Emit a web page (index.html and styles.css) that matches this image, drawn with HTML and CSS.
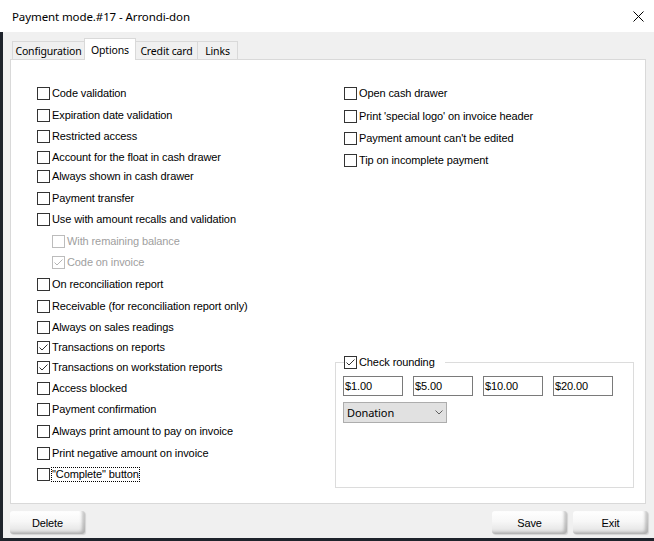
FILE: index.html
```html
<!DOCTYPE html>
<html>
<head>
<meta charset="utf-8">
<link rel="stylesheet" href="styles.css">
</head>
<body>
<div class="window">
  <div class="titlebar">
    <span class="title">Payment mode.#17 - Arrondi-don</span>
    <svg class="close" width="11" height="11" viewBox="0 0 11 11"><path d="M0.5 0.5 L10.5 10.5 M10.5 0.5 L0.5 10.5" stroke="#000" stroke-width="1" fill="none"/></svg>
  </div>
  <div class="client">
    <div class="tabs">
      <div class="tab t-config">Configuration</div>
      <div class="tab t-options active">Options</div>
      <div class="tab t-credit">Credit card</div>
      <div class="tab t-links">Links</div>
    </div>
    <div class="panel">
      <div class="col-left">
        <label class="cb"><span class="box"></span><span class="lbl">Code validation</span></label>
        <label class="cb"><span class="box"></span><span class="lbl">Expiration date validation</span></label>
        <label class="cb"><span class="box"></span><span class="lbl">Restricted access</span></label>
        <label class="cb"><span class="box"></span><span class="lbl">Account for the float in cash drawer</span></label>
        <label class="cb"><span class="box"></span><span class="lbl">Always shown in cash drawer</span></label>
        <label class="cb"><span class="box"></span><span class="lbl">Payment transfer</span></label>
        <label class="cb"><span class="box"></span><span class="lbl">Use with amount recalls and validation</span></label>
        <label class="cb sub disabled"><span class="box"></span><span class="lbl">With remaining balance</span></label>
        <label class="cb sub disabled"><span class="box"><svg width="11" height="11" viewBox="0 0 11 11"><path d="M1.5 5.5 L4 8 L9.5 2.5" stroke="#b4b4b4" stroke-width="1" fill="none"/></svg></span><span class="lbl">Code on invoice</span></label>
        <label class="cb"><span class="box"></span><span class="lbl">On reconciliation report</span></label>
        <label class="cb"><span class="box"></span><span class="lbl">Receivable (for reconciliation report only)</span></label>
        <label class="cb"><span class="box"></span><span class="lbl">Always on sales readings</span></label>
        <label class="cb"><span class="box"><svg width="11" height="11" viewBox="0 0 11 11"><path d="M1.5 5.5 L4 8 L9.5 2.5" stroke="#333" stroke-width="1" fill="none"/></svg></span><span class="lbl">Transactions on reports</span></label>
        <label class="cb"><span class="box"><svg width="11" height="11" viewBox="0 0 11 11"><path d="M1.5 5.5 L4 8 L9.5 2.5" stroke="#333" stroke-width="1" fill="none"/></svg></span><span class="lbl">Transactions on workstation reports</span></label>
        <label class="cb"><span class="box"></span><span class="lbl">Access blocked</span></label>
        <label class="cb"><span class="box"></span><span class="lbl">Payment confirmation</span></label>
        <label class="cb"><span class="box"></span><span class="lbl">Always print amount to pay on invoice</span></label>
        <label class="cb"><span class="box"></span><span class="lbl">Print negative amount on invoice</span></label>
        <label class="cb"><span class="box"></span><span class="lbl focus">"Complete" button</span></label>
      </div>
      <div class="col-right">
        <label class="cb"><span class="box"></span><span class="lbl">Open cash drawer</span></label>
        <label class="cb"><span class="box"></span><span class="lbl">Print 'special logo' on invoice header</span></label>
        <label class="cb"><span class="box"></span><span class="lbl">Payment amount can't be edited</span></label>
        <label class="cb"><span class="box"></span><span class="lbl">Tip on incomplete payment</span></label>
        <fieldset class="group">
          <legend class="legend"><span class="cb"><span class="box"><svg width="11" height="11" viewBox="0 0 11 11"><path d="M1.5 5.5 L4 8 L9.5 2.5" stroke="#333" stroke-width="1" fill="none"/></svg></span><span class="lbl">Check rounding</span></span></legend>
          <div class="amounts">
            <div class="field">$1.00</div>
            <div class="field">$5.00</div>
            <div class="field">$10.00</div>
            <div class="field">$20.00</div>
          </div>
          <div class="combo"><span>Donation</span><svg width="8" height="5" viewBox="0 0 8 5"><path d="M0.5 0.5 L4 4 L7.5 0.5" stroke="#606060" stroke-width="1" fill="none"/></svg></div>
        </fieldset>
      </div>
    </div>
    <div class="footer">
      <div class="btn">Delete</div>
      <div class="spacer"></div>
      <div class="btn">Save</div>
      <div class="btn">Exit</div>
    </div>
  </div>
</div>
</body>
</html>
```
FILE: styles.css
```css
html, body {
  margin: 0;
  padding: 0;
  background: #1e232b;
}
.window {
  width: 654px;
  height: 541px;
  display: flex;
  flex-direction: column;
  overflow: hidden;
}
.titlebar {
  height: 32px;
  flex: none;
  background: #fff;
  display: flex;
  align-items: center;
  justify-content: space-between;
  padding: 0 10px 0 12px;
  box-sizing: border-box;
}
.title {
  font-family: "Noto Sans", "Lato", sans-serif;
  font-size: 11.5px;
  letter-spacing: -0.1px;
  color: #000;
}
.close { display: block; }
.client {
  height: 506px;
  flex: none;
  margin-left: 3px;
  background: #f0f0f0;
  padding: 6px 0 0 7px;
  box-sizing: border-box;
  font-family: "Liberation Sans", Arial, sans-serif;
  font-size: 11px;
  letter-spacing: -0.1px;
  color: #000;
}
.tabs {
  display: flex;
  align-items: flex-end;
  height: 21px;
  padding-left: 2px;
}
.tab {
  height: 18px;
  box-sizing: border-box;
  border: 1px solid #d9d9d9;
  border-bottom: none;
  background: #f0f0f0;
  display: flex;
  align-items: center;
  justify-content: center;
  font-family: "Noto Sans", "Lato", sans-serif;
  font-size: 10.5px;
  letter-spacing: -0.15px;
  margin-right: -1px;
}
.tab.active {
  height: 22px;
  margin-bottom: -1px;
  background: #fff;
  position: relative;
  z-index: 1;
}
.t-config { width: 73px; }
.t-options { width: 52px; }
.t-credit { width: 63px; }
.t-links { width: 41px; }
.panel {
  width: 636px;
  height: 445px;
  box-sizing: border-box;
  border: 1px solid #d9d9d9;
  background: #fff;
  display: flex;
  padding: 27px 0 15px 26px;
}
.col-left {
  width: 307px;
  display: grid;
  grid-template-rows: 22px 21px 21px 19px 22px 21px 22px 21px 22px 22px 21px 20px 20px 21px 21px 22px 22px 21px 21px;
  align-content: start;
}
.col-right {
  flex: 1;
  display: grid;
  grid-template-rows: 23px 22px 22px 22px 1fr auto;
}
.cb {
  display: flex;
  align-items: flex-start;
  line-height: 13px;
  white-space: nowrap;
}
.box {
  width: 13px;
  height: 13px;
  box-sizing: border-box;
  border: 1px solid #333;
  background: #fff;
  flex: none;
  margin-right: 2px;
  display: flex;
  align-items: center;
  justify-content: center;
}
.box svg { display: block; }
.cb.sub { margin-left: 15px; }
.cb.disabled .box { border-color: #bcbcbc; }
.cb.disabled .lbl { color: #a0a0a0; }
.lbl.focus { outline: 1px dotted #000; }
.group {
  grid-row: 6;
  margin: 0 0 0 -9px;
  width: 299px;
  height: 132px;
  box-sizing: border-box;
  border: 1px solid #dcdcdc;
  padding: 7px 7px 0 7px;
  min-width: 0;
}
.legend {
  padding: 0 10px 0 0;
  margin-left: 1px;
}
.amounts {
  display: flex;
  gap: 10px;
}
.field {
  width: 60px;
  height: 20px;
  box-sizing: border-box;
  border: 1px solid #7a7a7a;
  background: #fff;
  padding-left: 1px;
  display: flex;
  align-items: center;
}
.combo {
  margin-top: 6px;
  width: 104px;
  height: 21px;
  box-sizing: border-box;
  background: #e1e1e1;
  border: 1px solid #adadad;
  display: flex;
  align-items: center;
  justify-content: space-between;
  padding: 0 3px 0 3px;
  font-family: "Noto Sans", "Lato", sans-serif;
  font-size: 11px;
  letter-spacing: -0.1px;
}
.combo svg { display: block; }
.footer {
  display: flex;
  margin-top: 7px;
  padding-right: 6px;
  gap: 6px;
}
.spacer { flex: 1; }
.btn {
  width: 75px;
  height: 23px;
  box-sizing: border-box;
  border-radius: 3px;
  background: linear-gradient(to bottom, #ffffff 0%, #f7f7f7 45%, #e0e0e0 100%);
  box-shadow: inset -3px -2px 3px rgba(0,0,0,0.22), 1px 1px 1px rgba(0,0,0,0.12);
  display: flex;
  align-items: center;
  justify-content: center;
}
```
